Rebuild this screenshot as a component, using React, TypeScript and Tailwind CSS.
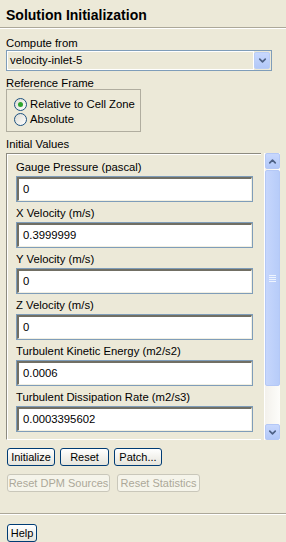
import { ChevronDown, ChevronUp } from "lucide-react";

const font = { fontFamily: '"Liberation Sans", Arial, sans-serif' };

function Field({ label, value }: { label: string; value: string }) {
  return (
    <div className="flex flex-col">
      <div className="h-[20px] leading-[20px] pt-[1px] whitespace-nowrap">{label}</div>
      <div className="h-[26px] border border-[#7f9db9] bg-white">
        <div className="h-full border-t-2 border-l-2 border-t-[#716f64] border-l-[#716f64] border-b border-r border-b-[#f1efe2] border-r-[#f1efe2] pl-[4px] leading-[20px]">
          {value}
        </div>
      </div>
    </div>
  );
}

function XpButton({ children, disabled, w }: { children: string; disabled?: boolean; w: string }) {
  return (
    <button
      className={`${w} h-[18px] rounded-[3px] border text-[11px] leading-none whitespace-nowrap px-0 ${
        disabled
          ? "border-[#c9c7ba] text-[#aca899] bg-[#f5f4ea]"
          : "border-[#003c74] text-black bg-gradient-to-b from-white to-[#e6e5dc]"
      }`}
      style={font}
    >
      {children}
    </button>
  );
}

function Radio({ checked, label }: { checked?: boolean; label: string }) {
  return (
    <div className="flex items-center gap-[3px] h-[14px] whitespace-nowrap">
      <div className="w-[13px] h-[13px] rounded-full border border-[#1c5180] bg-gradient-to-br from-[#dcdcd4] to-white flex items-center justify-center shrink-0">
        {checked && <div className="w-[5px] h-[5px] rounded-full bg-[#2ea52e]" />}
      </div>
      <span>{label}</span>
    </div>
  );
}

export default function App() {
  return (
    <div className="w-[286px] h-[542px] bg-[#ece9d8] text-[11.3px] text-black overflow-hidden flex flex-col" style={font}>
      <div className="h-[27px] pl-[6px] pt-[7px] text-[14px] font-bold leading-[16px]">Solution Initialization</div>
      <div className="border-t border-[#aca899] border-b border-b-white" />

      <div className="px-[6px] flex flex-col">
        <div className="h-[21px] leading-[20px] pt-[4px]">Compute from</div>
        <div className="w-[266px] h-[21px] border border-[#7f9db9] flex">
          <div className="flex-1 border border-white bg-[#ece9d8] pl-[2px] leading-[17px]">velocity-inlet-5</div>
          <div className="w-[16px] my-[1px] mr-[1px] rounded-[2px] border border-[#b9cdf6] bg-gradient-to-b from-[#c8d8fd] to-[#b2c8f8] flex items-center justify-center">
            <ChevronDown size={11} strokeWidth={3.5} className="text-[#4d6185]" />
          </div>
        </div>

        <div className="h-[18px] leading-[18px] pt-[3px]">Reference Frame</div>
        <div className="w-[135px] h-[43px] border border-[#b0ad9f] flex flex-col pl-[7px] pt-[7px] gap-[1px]">
          <Radio checked label="Relative to Cell Zone" />
          <Radio label="Absolute" />
        </div>

        <div className="h-[21px] leading-[20px] pt-[2px]">Initial Values</div>
        <div className="flex gap-[3px] h-[287px]">
          <div className="w-[255px] border-t border-l border-t-[#8d8b80] border-l-[#8d8b80] border-b border-b-white shadow-[inset_1px_1px_0_white] pl-[9px] pr-[8px] pt-[2px] flex flex-col">
            <Field label="Gauge Pressure (pascal)" value="0" />
            <Field label="X Velocity (m/s)" value="0.3999999" />
            <Field label="Y Velocity (m/s)" value="0" />
            <Field label="Z Velocity (m/s)" value="0" />
            <Field label="Turbulent Kinetic Energy (m2/s2)" value="0.0006" />
            <Field label="Turbulent Dissipation Rate (m2/s3)" value="0.0003395602" />
          </div>
          <div className="w-[16px] flex flex-col bg-gradient-to-r from-[#f3f1ec] to-[#fdfdfa] border-l border-l-white">
            <div className="h-[16px] rounded-[2px] border border-[#b4c8f6] bg-gradient-to-b from-[#c8d8fd] to-[#b2c8f8] flex items-center justify-center">
              <ChevronUp size={11} strokeWidth={3.5} className="text-[#4d6185]" />
            </div>
            <div className="h-[216px] mt-[1px] rounded-[2px] border border-[#b4c8f6] bg-gradient-to-r from-[#c6d6fc] to-[#b7ccf9] flex items-center justify-center">
              <div className="w-[7px] flex flex-col gap-[1px]">
                <div className="h-px bg-[#eef4fe]" />
                <div className="h-px bg-[#eef4fe]" />
                <div className="h-px bg-[#eef4fe]" />
                <div className="h-px bg-[#eef4fe]" />
              </div>
            </div>
            <div className="flex-1" />
            <div className="h-[16px] rounded-[2px] border border-[#b4c8f6] bg-gradient-to-b from-[#c8d8fd] to-[#b2c8f8] flex items-center justify-center">
              <ChevronDown size={11} strokeWidth={3.5} className="text-[#4d6185]" />
            </div>
          </div>
        </div>

        <div className="flex gap-[5px] mt-[8px] ml-[1px]">
          <XpButton w="w-[48px]">Initialize</XpButton>
          <XpButton w="w-[49px]">Reset</XpButton>
          <XpButton w="w-[48px]">Patch...</XpButton>
        </div>
        <div className="flex gap-[7px] mt-[8px] ml-[1px]">
          <XpButton w="w-[103px]" disabled>Reset DPM Sources</XpButton>
          <XpButton w="w-[83px]" disabled>Reset Statistics</XpButton>
        </div>
      </div>

      <div className="mt-[21px] border-t border-[#aca899] border-b border-b-white" />
      <div className="px-[7px] mt-[9px]">
        <XpButton w="w-[30px]">Help</XpButton>
      </div>
    </div>
  );
}
